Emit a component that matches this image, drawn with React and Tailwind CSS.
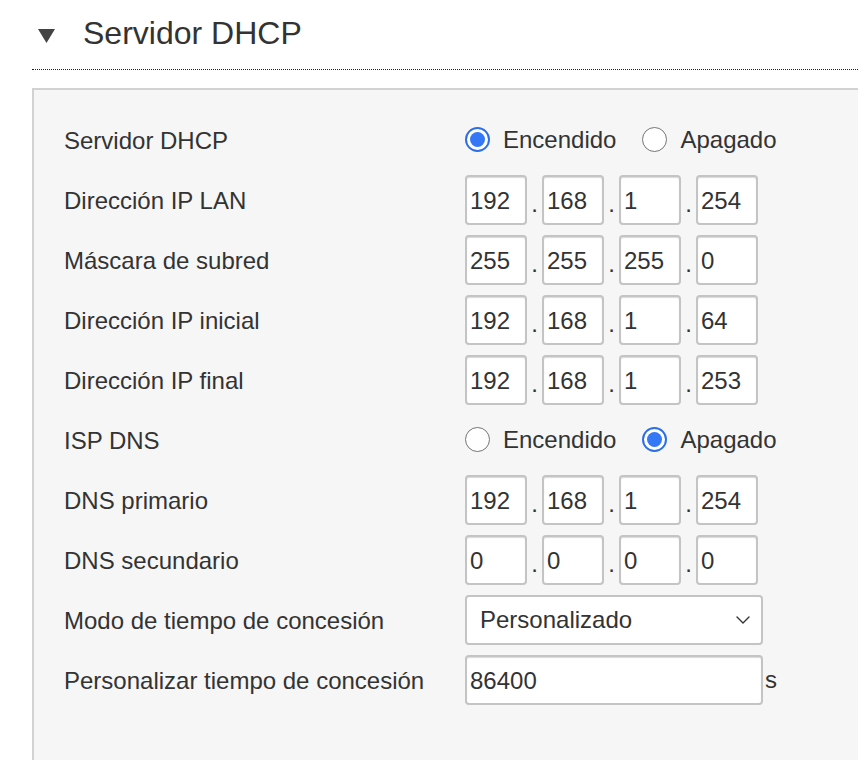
import { ChevronDown } from "lucide-react";

const font = { fontFamily: '"Liberation Sans", Arial, sans-serif' };

function Radio({ checked, label }) {
  return (
    <label className="flex items-center">
      <span
        className={
          checked
            ? "w-[25px] h-[25px] rounded-full border-[2px] border-[#2c6ee8] bg-white flex items-center justify-center"
            : "w-[25px] h-[25px] rounded-full border-[1.5px] border-[#757575] bg-white"
        }
      >
        {checked && <span className="w-[15px] h-[15px] rounded-full bg-[#3478f6]" />}
      </span>
      <span className="ml-[13px]">{label}</span>
    </label>
  );
}

function Box({ value, className = "w-[62px]" }) {
  return (
    <div
      className={`${className} h-[50px] bg-white border-2 border-[#c4c4c4] rounded-[4px] flex items-center pl-[3px] pt-[1px] shadow-[inset_0_1px_1px_rgba(0,0,0,0.15)]`}
    >
      {value}
    </div>
  );
}

function Ip({ parts }) {
  return (
    <div className="flex items-center">
      {parts.map((p, i) => (
        <div key={i} className="flex items-center">
          {i > 0 && <span className="w-[15px] text-center pt-[8px]">.</span>}
          <Box value={p} />
        </div>
      ))}
    </div>
  );
}

const rows = [
  ["Servidor DHCP", { radio: 0 }],
  ["Dirección IP LAN", { ip: ["192", "168", "1", "254"] }],
  ["Máscara de subred", { ip: ["255", "255", "255", "0"] }],
  ["Dirección IP inicial", { ip: ["192", "168", "1", "64"] }],
  ["Dirección IP final", { ip: ["192", "168", "1", "253"] }],
  ["ISP DNS", { radio: 1 }],
  ["DNS primario", { ip: ["192", "168", "1", "254"] }],
  ["DNS secundario", { ip: ["0", "0", "0", "0"] }],
  ["Modo de tiempo de concesión", { select: "Personalizado" }],
  ["Personalizar tiempo de concesión", { text: "86400" }],
];

export default function App() {
  return (
    <div className="w-[858px] h-[760px] overflow-hidden bg-white text-[#333]" style={font}>
      <div className="flex items-center h-[70px] ml-[32px] border-b border-dotted border-[#222] pb-[4px]">
        <svg width="17" height="15" viewBox="0 0 17 15" className="ml-[6px] mt-[6px]">
          <path d="M0 1 H17 L8.5 15 Z" fill="#444" />
        </svg>
        <h1 className="ml-[28px] text-[32px] leading-none">Servidor DHCP</h1>
      </div>
      <div className="mt-[18px] ml-[32px] w-[850px] h-[700px] bg-[#f6f6f6] border-t-2 border-l-2 border-[#d2d2d2] pt-[20px] pl-[30px] text-[24px]">
        {rows.map(([label, c]) => (
          <div key={label} className="flex items-center h-[60px]">
            <div className="w-[401px] pt-[1px]">{label}</div>
            {"radio" in c && (
              <div className="flex items-center gap-[26px] -mt-[1px]">
                <Radio checked={c.radio === 0} label="Encendido" />
                <Radio checked={c.radio === 1} label="Apagado" />
              </div>
            )}
            {c.ip && <Ip parts={c.ip} />}
            {c.select && (
              <div className="w-[298px] h-[50px] bg-white border-2 border-[#c4c4c4] rounded-[4px] flex items-center justify-between pl-[13px] pr-[6px]">
                <span>{c.select}</span>
                <ChevronDown size={24} strokeWidth={1.4} color="#333" />
              </div>
            )}
            {c.text && (
              <div className="flex items-center">
                <Box value={c.text} className="w-[298px]" />
                <span className="ml-[2px]">s</span>
              </div>
            )}
          </div>
        ))}
      </div>
    </div>
  );
}
